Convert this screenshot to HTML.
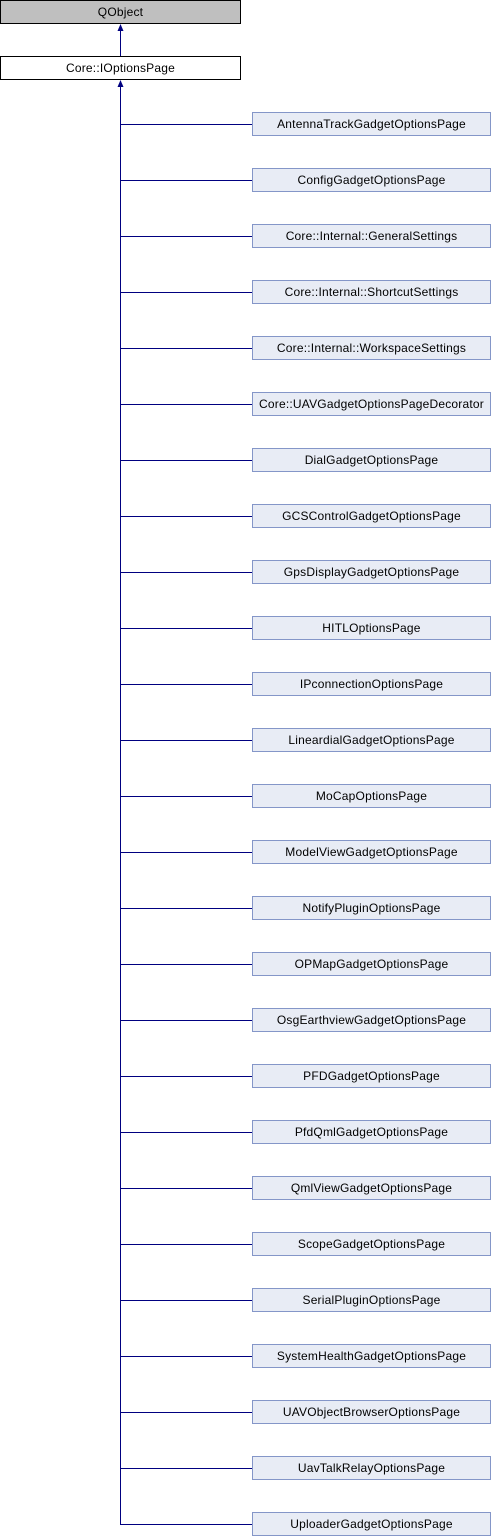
<!DOCTYPE html>
<html><head><meta charset="utf-8"><style>
html,body{margin:0;padding:0;background:#fff;width:492px;height:1536px;overflow:hidden}
svg text{font-family:"Liberation Sans",sans-serif;font-size:12px;letter-spacing:0.2px;fill:#000;text-anchor:middle}
</style></head><body>
<svg width="492" height="1536" xmlns="http://www.w3.org/2000/svg">
<rect x="0.5" y="0.5" width="240" height="23" fill="#bfbfbf" stroke="#000"/>
<text x="120.5" y="16">QObject</text>
<rect x="0.5" y="56.5" width="240" height="23" fill="#fff" stroke="#000"/>
<text x="120.5" y="72">Core::IOptionsPage</text>
<line x1="120.5" y1="30" x2="120.5" y2="56" stroke="#000080" stroke-width="1"/>
<polygon points="120.5,24 117.5,31 123.5,31" fill="#000080"/>
<line x1="120.5" y1="86" x2="120.5" y2="1524.5" stroke="#000080" stroke-width="1"/>
<polygon points="120.5,80 117.5,87 123.5,87" fill="#000080"/>
<g id="kids"></g>
</svg>
<script>
var names=["AntennaTrackGadgetOptionsPage","ConfigGadgetOptionsPage","Core::Internal::GeneralSettings","Core::Internal::ShortcutSettings","Core::Internal::WorkspaceSettings","Core::UAVGadgetOptionsPageDecorator","DialGadgetOptionsPage","GCSControlGadgetOptionsPage","GpsDisplayGadgetOptionsPage","HITLOptionsPage","IPconnectionOptionsPage","LineardialGadgetOptionsPage","MoCapOptionsPage","ModelViewGadgetOptionsPage","NotifyPluginOptionsPage","OPMapGadgetOptionsPage","OsgEarthviewGadgetOptionsPage","PFDGadgetOptionsPage","PfdQmlGadgetOptionsPage","QmlViewGadgetOptionsPage","ScopeGadgetOptionsPage","SerialPluginOptionsPage","SystemHealthGadgetOptionsPage","UAVObjectBrowserOptionsPage","UavTalkRelayOptionsPage","UploaderGadgetOptionsPage"];
var g=document.getElementById('kids'),h='';
names.forEach(function(n,i){var y=112+i*56;
h+='<line x1="120" y1="'+(y+12.5)+'" x2="252" y2="'+(y+12.5)+'" stroke="#000080"/>';
h+='<rect x="252.5" y="'+(y+0.5)+'" width="238" height="23" fill="#e8ecf5" stroke="#8496c8"/>';
h+='<text x="371.5" y="'+(y+16)+'">'+n+'</text>';});
g.innerHTML=h;
</script>
</body></html>
